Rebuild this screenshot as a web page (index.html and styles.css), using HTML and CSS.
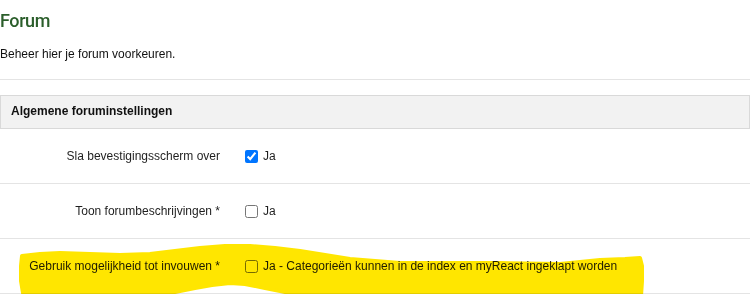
FILE: index.html
```html
<!DOCTYPE html>
<html lang="nl">
<head>
<meta charset="utf-8">
<title>Forum</title>
<link rel="stylesheet" href="styles.css">
</head>
<body>
<div class="page">
  <h1 class="title">Forum</h1>
  <p class="intro">Beheer hier je forum voorkeuren.</p>
  <hr class="divider">
  <section class="group">
    <h2 class="group-title">Algemene foruminstellingen</h2>
    <div class="row">
      <div class="label">Sla bevestigingsscherm over</div>
      <label class="value"><input class="check" type="checkbox" checked><span>Ja</span></label>
    </div>
    <div class="row">
      <div class="label">Toon forumbeschrijvingen *</div>
      <label class="value"><input class="check" type="checkbox"><span>Ja</span></label>
    </div>
    <div class="row">
      <div class="label">Gebruik mogelijkheid tot invouwen *</div>
      <label class="value"><input class="check" type="checkbox"><span>Ja - Categorieën kunnen in de index en myReact ingeklapt worden</span></label>
    </div>
  </section>
  <svg class="marker" width="753" height="297" viewBox="0 0 753 297" aria-hidden="true">
    <polygon points="22,245 40,243 60,242 90,243 120,244 150,243 175,240 200,237 225,235 250,235 275,237 300,240 325,244 350,248 375,250 400,252 450,252 500,252 560,253 600,249 625,248 640,247 642,255 642,270 641,285 620,287 600,289 560,292 500,293 450,293 400,292 376,291 340,287 320,285 290,282 265,277 245,273 230,272 212,274 195,277 180,280 160,284 120,287 90,286 60,285 40,283 23,282 21,270 21,255"/>
  </svg>
</div>
</body>
</html>
```

FILE: styles.css
```css
html, body {
  margin: 0;
  padding: 0;
  background: #ffffff;
}

body {
  font-family: "Liberation Sans", Arial, sans-serif;
  font-size: 12px;
  line-height: 16px;
  color: #222222;
}

.page {
  position: relative;
  width: 750px;
}

.title {
  margin: 11px 0 0 0;
  font-family: Roboto, "Liberation Sans", Arial, sans-serif;
  font-size: 18px;
  line-height: 20px;
  font-weight: 500;
  letter-spacing: -0.4px;
  color: #2b5e2b;
}

.intro {
  margin: 15px 0 0 0;
  line-height: 16px;
  color: #111111;
}

.divider {
  margin: 17px 0 15px 0;
  border: 0;
  border-top: 1px solid #e4e4e4;
  height: 0;
}

.group {
  margin: 0;
}

.group-title {
  margin: 0;
  padding: 7px 10px 9px 10px;
  font-size: 12px;
  line-height: 16px;
  font-weight: 700;
  color: #111111;
  background: #f2f2f2;
  border: 1px solid #d9d9d9;
}

.row {
  display: grid;
  grid-template-columns: 220px 1fr;
  column-gap: 25px;
  padding: 19px 0;
  border-bottom: 1px solid #e4e4e4;
}

.label {
  text-align: right;
  color: #1f1f1f;
}

.value {
  display: flex;
  align-items: center;
  color: #1f1f1f;
}

.check {
  width: 13px;
  height: 13px;
  margin: 0 5px 0 0;
  flex: none;
}

.marker {
  position: absolute;
  left: 0;
  top: 0;
  pointer-events: none;
  mix-blend-mode: multiply;
}

.marker polygon {
  fill: #ffe600;
  stroke: #ffe600;
  stroke-width: 4;
  stroke-linejoin: round;
}
```
